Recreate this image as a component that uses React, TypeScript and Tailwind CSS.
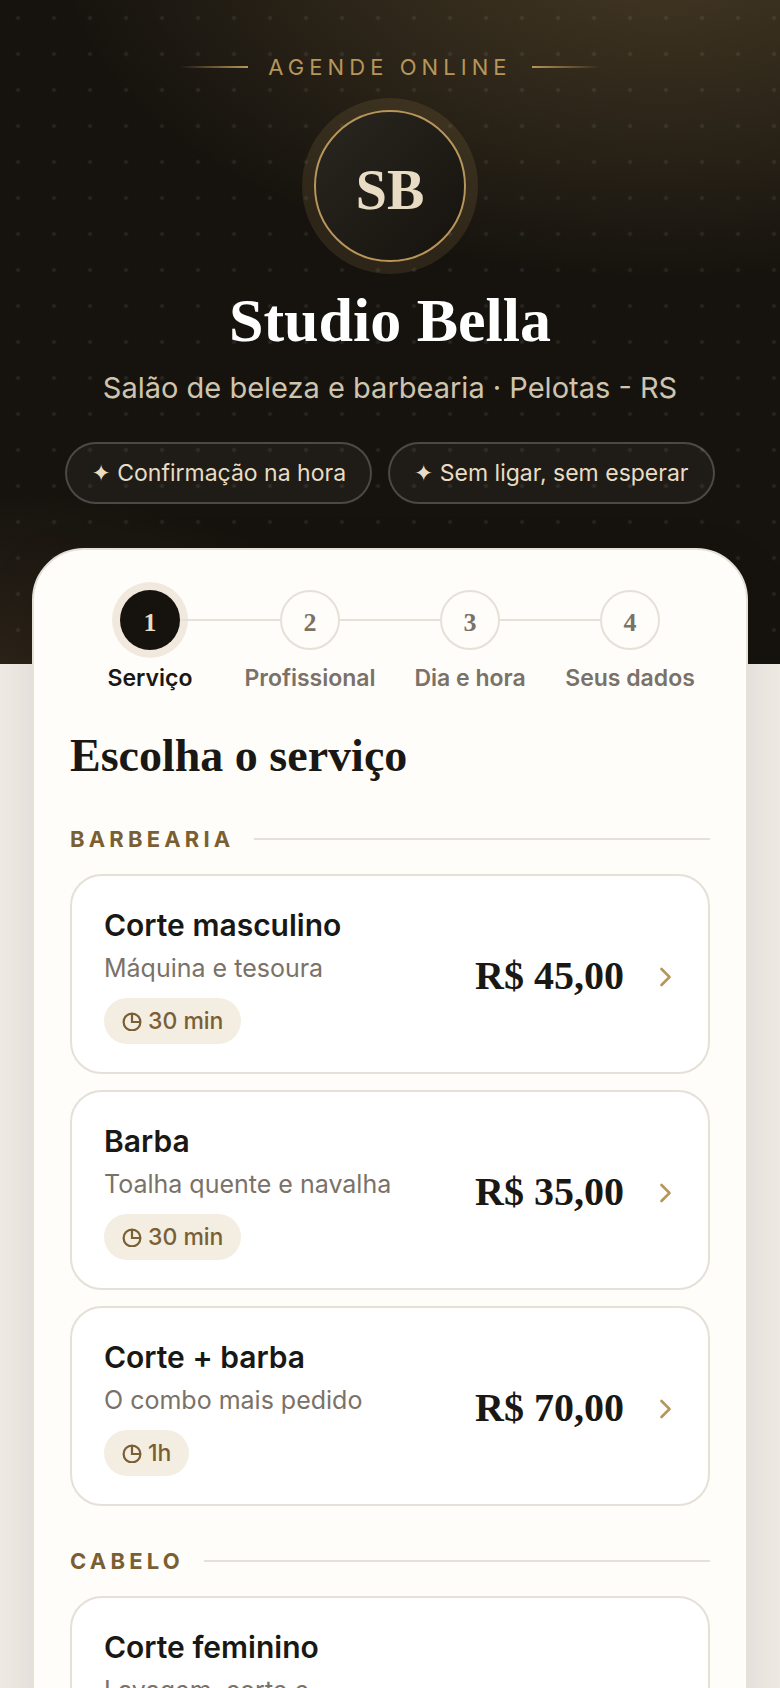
import React from "react";

type Service = {
  name: string;
  description: string;
  duration?: string;
  price?: string;
};

type Group = {
  title: string;
  services: Service[];
};

const steps = ["Serviço", "Profissional", "Dia e hora", "Seus dados"];

const perks = ["Confirmação na hora", "Sem ligar, sem esperar"];

const groups: Group[] = [
  {
    title: "Barbearia",
    services: [
      {
        name: "Corte masculino",
        description: "Máquina e tesoura",
        duration: "30 min",
        price: "R$ 45,00",
      },
      {
        name: "Barba",
        description: "Toalha quente e navalha",
        duration: "30 min",
        price: "R$ 35,00",
      },
      {
        name: "Corte + barba",
        description: "O combo mais pedido",
        duration: "1h",
        price: "R$ 70,00",
      },
    ],
  },
  {
    title: "Cabelo",
    services: [{ name: "Corte feminino", description: "Lavagem, corte e" }],
  },
];

function Hero() {
  return (
    <header className="bg-[#16130e] bg-[radial-gradient(circle,rgba(255,255,255,0.08)_1px,transparent_3px),radial-gradient(120%_80%_at_85%_-10%,rgba(184,149,90,0.3),transparent_65%),radial-gradient(90%_60%_at_0%_110%,rgba(184,140,90,0.18),transparent_60%)] bg-[size:36px_36px,100%_100%,100%_100%] px-6 pt-[52px] pb-40 text-center">
      <div className="flex items-center justify-center gap-5">
        <span className="h-[2px] w-[68px] bg-linear-to-r from-transparent to-[#b8955a]" />
        <p className="text-[22px] leading-[30px] tracking-[0.23em] text-[#b8955a] uppercase">
          Agende online
        </p>
        <span className="h-[2px] w-[68px] bg-linear-to-l from-transparent to-[#b8955a]" />
      </div>

      <div className="mx-auto mt-7 flex size-[152px] items-center justify-center rounded-full border-2 border-[#b8955a] bg-linear-to-br from-[#2a2620] to-[#16130e] pt-2 font-['Liberation_Serif',serif] text-[56px] font-bold text-[#e8dcc4] shadow-[0_0_0_12px_rgba(184,149,90,0.15)]">
        SB
      </div>

      <h1 className="mt-[22px] font-['Liberation_Serif',serif] text-[62px] leading-[72px] font-bold text-white">
        Studio Bella
      </h1>
      <p className="mt-3 text-[29px] leading-10 text-[#cfc4ae]">
        Salão de beleza e barbearia · Pelotas - RS
      </p>

      <ul className="mt-[34px] flex flex-wrap justify-center gap-4">
        {perks.map((perk) => (
          <li
            key={perk}
            className="rounded-full border-2 border-white/20 bg-white/4 px-6 py-3 text-[23px] leading-[34px] text-[#e8dcc4]"
          >
            ✦ {perk}
          </li>
        ))}
      </ul>
    </header>
  );
}

function Steps() {
  return (
    <ol className="grid grid-cols-4">
      {steps.map((label, i) => (
        <li key={label} className="flex flex-col items-center">
          <div className="flex w-full items-center">
            <span
              className={`h-[2px] flex-1 ${i === 0 ? "bg-transparent" : "bg-[#e5e0d8]"}`}
            />
            <span
              className={`flex size-[60px] items-center justify-center rounded-full pt-1 font-['Liberation_Serif',serif] text-[26px] font-bold ${
                i === 0
                  ? "bg-[#16130e] text-[#e8dcc4] shadow-[0_0_0_8px_#f2e9de]"
                  : "border-2 border-[#e5e0d8] bg-[#fffdf9] text-[#7a7268]"
              }`}
            >
              {i + 1}
            </span>
            <span
              className={`h-[2px] flex-1 ${i === steps.length - 1 ? "bg-transparent" : "bg-[#e5e0d8]"}`}
            />
          </div>
          <span
            className={`mt-3 text-[23px] leading-8 font-semibold whitespace-nowrap ${
              i === 0 ? "text-[#1a1814]" : "text-[#7a7268]"
            }`}
          >
            {label}
          </span>
        </li>
      ))}
    </ol>
  );
}

function Chevron() {
  return (
    <svg
      className="ml-7 h-6 w-6 shrink-0 text-[#b8955a]"
      viewBox="0 0 24 24"
      fill="none"
      stroke="currentColor"
      strokeWidth="2.6"
      strokeLinecap="round"
      strokeLinejoin="round"
      aria-hidden="true"
    >
      <path d="M9.5 5l8 8-8 8" />
    </svg>
  );
}

function ServiceCard({ service }: { service: Service }) {
  return (
    <button
      type="button"
      className="flex w-full items-center rounded-[32px] border-2 border-[#e5e0d8] bg-white px-8 py-7 text-left"
    >
      <span className="flex flex-1 flex-col items-start">
        <span className="text-[30px] leading-[42px] font-semibold text-[#1a1814]">
          {service.name}
        </span>
        <span className="mt-1 text-[25px] leading-9 text-[#7a7268]">
          {service.description}
        </span>
        {service.duration && (
          <span className="mt-3 flex items-center gap-[6px] rounded-full bg-[#f4ede2] px-[18px] py-[6px] text-[23px] leading-[34px] font-medium text-[#7a5f35]">
            <svg
              className="h-5 w-5 shrink-0"
              viewBox="0 0 20 20"
              fill="none"
              stroke="currentColor"
              strokeWidth="2.2"
              aria-hidden="true"
            >
              <circle cx="10" cy="11" r="8.4" />
              <path d="M10 2.6V11h8.4" />
            </svg>
            {service.duration}
          </span>
        )}
      </span>
      {service.price && (
        <span className="flex items-center pt-1">
          <span className="font-['Liberation_Serif',serif] text-[40px] font-bold whitespace-nowrap text-[#1a1814]">
            {service.price}
          </span>
          <Chevron />
        </span>
      )}
    </button>
  );
}

export default function App() {
  return (
    <div className="h-screen overflow-hidden bg-[#f1ece6] font-['Inter','DejaVu_Sans',sans-serif]">
      <Hero />

      <main className="relative mx-8 -mt-[116px] rounded-t-[52px] border-2 border-[#e5e0d8] bg-[#fffdf9] px-9 pt-10 pb-16 shadow-[0_20px_60px_rgba(22,19,14,0.1)]">
        <Steps />

        <h2 className="mt-[34px] font-['Liberation_Serif',serif] text-[46px] leading-[56px] font-bold text-[#1a1814]">
          Escolha o serviço
        </h2>

        {groups.map((group) => (
          <section key={group.title} className="mt-10">
            <div className="mb-5 flex items-center gap-5">
              <h3 className="text-[22px] leading-[30px] font-bold tracking-[0.19em] text-[#7a5f35] uppercase">
                {group.title}
              </h3>
              <span className="h-[2px] flex-1 bg-[#e5e0d8]" />
            </div>
            <div className="flex flex-col gap-4">
              {group.services.map((service) => (
                <ServiceCard key={service.name} service={service} />
              ))}
            </div>
          </section>
        ))}
      </main>
    </div>
  );
}
